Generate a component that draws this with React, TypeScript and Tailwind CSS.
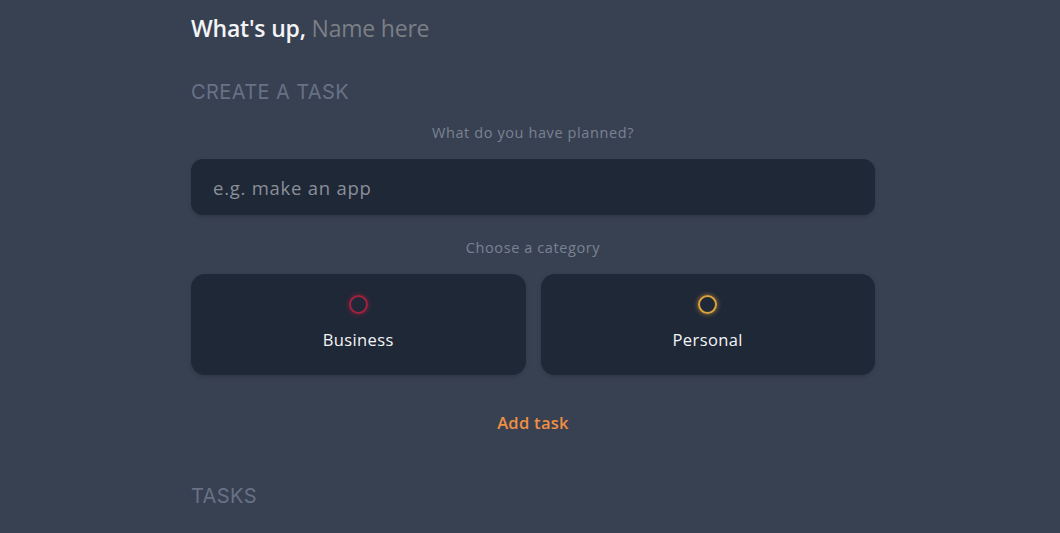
import React, { useState } from "react";

const categories = [
  { name: "Business", ring: "border-[#a5213e] shadow-[0_0_5px_rgba(165,33,62,0.7)]" },
  { name: "Personal", ring: "border-[#dea23c] shadow-[0_0_5px_rgba(222,162,60,0.7)]" },
];

export default function App() {
  const [todo, setTodo] = useState("");
  const [category, setCategory] = useState("");

  return (
    <div className="min-h-screen w-full bg-[#384152] font-['Open_Sans',sans-serif]">
      <div className="ml-[191px] w-[684px] flex flex-col pt-[13px]">
        {/* greeting */}
        <h2 className="text-[23px] font-semibold text-[#f3f4f6] tracking-[-0.2px] leading-[30px]">
          What's up, <span className="font-medium text-[#7b7f86]">Name here</span>
        </h2>

        {/* create a task */}
        <h3 className="mt-[35px] text-[20px] text-[#687186] font-['Inter',sans-serif] font-normal tracking-[0.4px] uppercase leading-[28px]">
          Create a task
        </h3>

        <p className="mt-[17px] text-center text-[14.5px] tracking-[0.6px] text-[#7a8292] leading-[20px]">
          What do you have planned?
        </p>
        <input
          type="text"
          value={todo}
          onChange={(e) => setTodo(e.target.value)}
          placeholder="e.g. make an app"
          className="mt-[16px] h-[56px] w-full rounded-[12px] bg-[#1f2837] px-[22px] text-[18.5px] tracking-[0.75px] text-white placeholder:text-[#8a8f98] outline-none shadow-[0_2px_4px_rgba(0,0,0,0.15)]"
        />

        <p className="mt-[23px] text-center text-[14.5px] tracking-[0.6px] text-[#7a8292] leading-[20px]">
          Choose a category
        </p>
        <div className="mt-[16px] grid grid-cols-2 gap-[15px]">
          {categories.map((c) => (
            <button
              key={c.name}
              onClick={() => setCategory(c.name)}
              className="flex h-[101px] flex-col items-center rounded-[14px] bg-[#1f2837] shadow-[0_2px_4px_rgba(0,0,0,0.15)]"
            >
              <span
                className={`mt-[21px] h-[19px] w-[19px] rounded-full border-2 ${c.ring} ${
                  category === c.name ? "bg-current" : ""
                }`}
              />
              <span className="mt-[15px] text-[16.5px] tracking-[0.4px] font-medium text-[#f3f4f6] leading-[22px]">
                {c.name}
              </span>
            </button>
          ))}
        </div>

        <button className="mt-[37px] self-center text-[16.5px] tracking-[0.3px] font-semibold text-[#ef8f43] leading-[22px]">
          Add task
        </button>

        {/* list */}
        <h3 className="mt-[48px] text-[20px] text-[#687186] font-['Inter',sans-serif] font-normal tracking-[0.4px] uppercase leading-[28px]">
          Tasks
        </h3>
      </div>
    </div>
  );
}
